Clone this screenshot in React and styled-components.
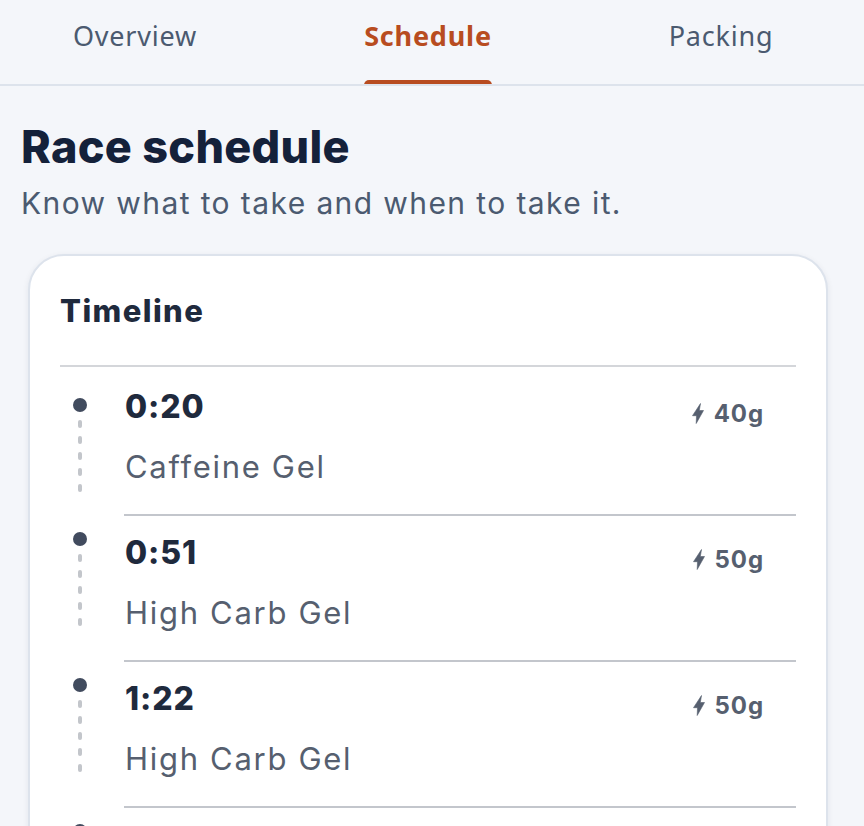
import React from 'react';
import styled, { createGlobalStyle } from 'styled-components';

const GlobalStyle = createGlobalStyle`
  html, body {
    margin: 0;
    height: 100%;
    overflow: hidden;
    background: #f4f6fa;
  }
`;

const Page = styled.div`
  width: 864px;
  height: 826px;
  overflow: hidden;
  background: #f4f6fa;
  font-family: Inter, sans-serif;
`;

const Tabs = styled.nav`
  display: grid;
  grid-template-columns: repeat(3, 293px);
  height: 84px;
  overflow: hidden;
  border-bottom: 2px solid #dde3ec;
`;

const Tab = styled.div`
  position: relative;
  left: -11.5px;
  display: flex;
  justify-content: center;
`;

const TabLabel = styled.span`
  position: relative;
  height: 84px;
  line-height: 72px;
  font-family: 'Noto Sans', sans-serif;
  font-size: 27px;
  letter-spacing: 0.8px;
  font-weight: ${(p) => (p.$active ? 700 : 400)};
  color: ${(p) => (p.$active ? '#b84c20' : '#4b5a70')};

  ${(p) =>
    p.$active &&
    `
    &::after {
      content: '';
      position: absolute;
      left: 0;
      right: 0;
      bottom: -2px;
      height: 6px;
      background: #b84c20;
      border-radius: 5px 5px 0 0;
    }
  `}
`;

const Intro = styled.header`
  padding: 35px 21px 0;
`;

const Title = styled.h1`
  margin: 0;
  font-size: 45px;
  line-height: 52px;
  font-weight: 800;
  letter-spacing: 0.3px;
  color: #14213a;
`;

const Subtitle = styled.p`
  margin: 10px 0 0;
  font-size: 30px;
  line-height: 40px;
  letter-spacing: 1.4px;
  color: #4b5a70;
`;

const Card = styled.section`
  margin: 31px 36px 0 28px;
  padding: 0 30px;
  background: #fff;
  border: 2px solid #dde3ec;
  border-radius: 36px;
  box-shadow: 0 2px 6px rgba(30, 41, 59, 0.08);
`;

const CardTitle = styled.h2`
  margin: 0;
  height: 111px;
  padding: 35px 0 0;
  box-sizing: border-box;
  font-size: 31px;
  line-height: 40px;
  font-weight: 800;
  letter-spacing: 1.4px;
  color: #1f2a3d;
  border-bottom: 2px solid #d4d6da;
`;

const Row = styled.div`
  display: flex;
  height: ${(p) => (p.$first ? 149 : 146)}px;
`;

const Rail = styled.div`
  width: 64px;
  flex: none;
  display: flex;
  flex-direction: column;
  align-items: center;
  padding: ${(p) => (p.$first ? 31 : 16)}px 24px 0 0;
  box-sizing: border-box;
`;

const Dot = styled.span`
  width: 14px;
  height: 14px;
  border-radius: 50%;
  background: #414b5e;
`;

const Dash = styled.span`
  width: 4px;
  height: 8px;
  margin-top: 8px;
  border-radius: 2px;
  background: #c3c6cb;
`;

const Body = styled.div`
  flex: 1;
  display: flex;
  justify-content: space-between;
  border-bottom: 2px solid #c3c6cc;
`;

const Stop = styled.div`
  padding-left: 1px;
`;

const Time = styled.div`
  margin-top: ${(p) => (p.$first ? 20 : 17)}px;
  font-size: 32px;
  line-height: 40px;
  font-weight: 800;
  letter-spacing: 0.9px;
  color: #1f2a3d;
`;

const Name = styled.div`
  margin-top: 20px;
  font-size: 31px;
  line-height: 40px;
  letter-spacing: 1.7px;
  color: #565f6f;
`;

const Carbs = styled.div`
  display: flex;
  align-items: center;
  gap: 10px;
  height: 40px;
  margin: ${(p) => (p.$first ? 26 : 23)}px 32px 0 0;
  font-size: 24px;
  font-weight: 700;
  letter-spacing: 0.9px;
  color: #565f6f;
`;

const BoltIcon = () => (
  <svg width="12" height="21" viewBox="0 0 12 21" aria-hidden="true">
    <path
      d="M8.5 0.5 0.5 12.7h4L4.2 20.5 11.5 7.5H7.3z"
      fill="currentColor"
      stroke="currentColor"
      strokeWidth="0.6"
      strokeLinejoin="round"
    />
  </svg>
);

const stops = [
  { time: '0:20', name: 'Caffeine Gel', carbs: '40g' },
  { time: '0:51', name: 'High Carb Gel', carbs: '50g' },
  { time: '1:22', name: 'High Carb Gel', carbs: '50g' },
  { time: '1:53', name: 'High Carb Gel', carbs: '50g' },
];

export default function App() {
  return (
    <Page>
      <GlobalStyle />
      <Tabs>
        <Tab><TabLabel>Overview</TabLabel></Tab>
        <Tab><TabLabel $active>Schedule</TabLabel></Tab>
        <Tab><TabLabel>Packing</TabLabel></Tab>
      </Tabs>
      <Intro>
        <Title>Race schedule</Title>
        <Subtitle>Know what to take and when to take it.</Subtitle>
      </Intro>
      <Card>
        <CardTitle>Timeline</CardTitle>
        {stops.map((stop, index) => (
          <Row key={stop.time} $first={index === 0}>
            <Rail $first={index === 0}>
              <Dot />
              {[0, 1, 2, 3, 4].map((i) => (
                <Dash key={i} />
              ))}
            </Rail>
            <Body>
              <Stop>
                <Time $first={index === 0}>{stop.time}</Time>
                <Name>{stop.name}</Name>
              </Stop>
              <Carbs $first={index === 0}>
                <BoltIcon />
                {stop.carbs}
              </Carbs>
            </Body>
          </Row>
        ))}
      </Card>
    </Page>
  );
}
